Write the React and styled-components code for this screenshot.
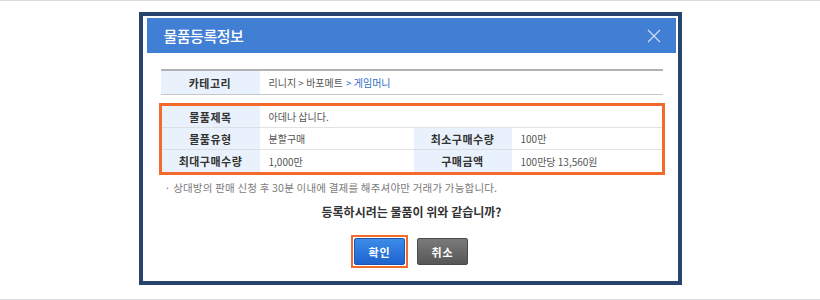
import React from "react";
import styled, { createGlobalStyle } from "styled-components";

const GlobalStyle = createGlobalStyle`
  body {
    margin: 0;
    background: #fff;
    font-family: "Noto Sans CJK KR", "Noto Sans", sans-serif;
  }
`;

const details = [
  [{ label: "물품제목", value: "아데나 삽니다.", wide: true }],
  [
    { label: "물품유형", value: "분할구매" },
    { label: "최소구매수량", value: "100만" },
  ],
  [
    { label: "최대구매수량", value: "1,000만" },
    { label: "구매금액", value: "100만당 13,560원" },
  ],
];

function RegisterConfirm() {
  return (
    <Page>
      <Modal>
        <Header>
          <Title>물품등록정보</Title>
          <Close aria-label="닫기">
            <svg width="14" height="14" viewBox="0 0 14 14">
              <path d="M1 1 L13 13 M13 1 L1 13" stroke="#cfe0f6" strokeWidth="1.2" fill="none" />
            </svg>
          </Close>
        </Header>
        <Body>
          <CategoryTable>
            <Label>카테고리</Label>
            <Value>
              리니지 &gt; 바포메트 <Current>&gt; 게임머니</Current>
            </Value>
          </CategoryTable>

          <InfoBox>
            {details.map((row, i) =>
              row.map((cell) => (
                <React.Fragment key={cell.label}>
                  <Label $line={i < details.length - 1}>{cell.label}</Label>
                  <Value $wide={cell.wide} $line={i < details.length - 1}>
                    {cell.value}
                  </Value>
                </React.Fragment>
              ))
            )}
          </InfoBox>

          <Note>· 상대방의 판매 신청 후 30분 이내에 결제를 해주셔야만 거래가 가능합니다.</Note>
          <Question>등록하시려는 물품이 위와 같습니까?</Question>

          <Buttons>
            <Focus>
              <Button $variant="primary">확인</Button>
            </Focus>
            <Button>취소</Button>
          </Buttons>
        </Body>
      </Modal>
    </Page>
  );
}

export default function App() {
  return (
    <>
      <GlobalStyle />
      <RegisterConfirm />
    </>
  );
}

const Page = styled.div`
  box-sizing: border-box;
  height: 300px;
  padding-top: 11px;
  border-top: 1px solid #d8dce1;
  border-bottom: 1px solid #d8dce1;
`;

const Modal = styled.div`
  box-sizing: border-box;
  width: 543px;
  height: 273px;
  margin: 0 auto;
  border: 4px solid #27446e;
  padding: 2px 2px 0 4px;
  background: #fff;
`;

const Header = styled.div`
  height: 35px;
  display: flex;
  align-items: center;
  justify-content: space-between;
  padding: 0 15px 0 17px;
  background: #417fd4;
`;

const Title = styled.h1`
  margin: 0;
  color: #fff;
  font-size: 15px;
  font-weight: 500;
  letter-spacing: -0.5px;
`;

const Close = styled.span`
  display: flex;
  width: 14px;
  height: 14px;
`;

const Body = styled.div`
  padding: 16px 13px 0 14px;
`;

const CategoryTable = styled.div`
  display: grid;
  grid-template-columns: 99px 1fr;
  border-top: 2px solid #b2b2b2;
  border-bottom: 1px solid #c8c8c8;
`;

const Label = styled.div`
  height: 23px;
  display: flex;
  align-items: center;
  justify-content: center;
  background: #e9f2fc;
  color: #333;
  font-size: 11px;
  font-weight: 700;
  letter-spacing: 0.5px;
  box-sizing: border-box;
  border-bottom: ${(p) => (p.$line ? "1px solid #dadde2" : "none")};
`;

const Value = styled.div`
  height: 23px;
  display: flex;
  align-items: center;
  padding-left: 9px;
  color: #555;
  font-size: 10px;
  box-sizing: border-box;
  grid-column: ${(p) => (p.$wide ? "span 3" : "auto")};
  border-bottom: ${(p) => (p.$line ? "1px solid #e2e2e2" : "none")};
`;

const Current = styled.span`
  margin-left: 3px;
  color: #2f6fc6;
`;

const InfoBox = styled.div`
  display: grid;
  grid-template-columns: 98px 154px 98px 1fr;
  grid-auto-rows: 22px;
  margin: 8px -2px 0;
  border: 3px solid #f26b2b;

  & > div {
    height: 22px;
  }
`;

const Note = styled.p`
  margin: 6px 0 0;
  padding-left: 4px;
  line-height: 14px;
  color: #7a7a7a;
  font-size: 10.5px;
  letter-spacing: 0.2px;
`;

const Question = styled.p`
  margin: 10px 0 0;
  line-height: 14px;
  text-align: center;
  color: #333;
  font-size: 12px;
  font-weight: 700;
`;

const Buttons = styled.div`
  display: flex;
  align-items: center;
  justify-content: center;
  gap: 9px;
  margin-top: 16px;
  padding-right: 4px;
`;

const Focus = styled.div`
  display: flex;
  padding: 1px;
  border: 2px solid #f26b2b;
`;

const Button = styled.button`
  width: 51px;
  height: 27px;
  padding: 0;
  border: 1px solid ${(p) => (p.$variant === "primary" ? "#1b57b3" : "#4a4a4a")};
  border-radius: 2px;
  background: ${(p) =>
    p.$variant === "primary"
      ? "linear-gradient(#3c8ce8, #1e63d0)"
      : "linear-gradient(#7a7a7a, #575757)"};
  color: #fff;
  font-family: "Noto Sans CJK KR", sans-serif;
  font-size: 11px;
  font-weight: 700;
  letter-spacing: 1px;
  cursor: pointer;
`;
